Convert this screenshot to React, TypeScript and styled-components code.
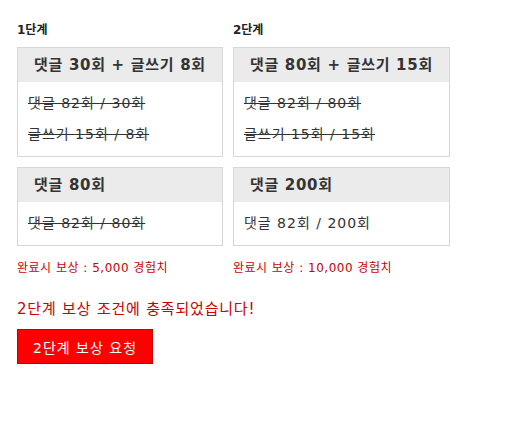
import React from 'react';
import styled, { createGlobalStyle } from 'styled-components';

const GlobalStyle = createGlobalStyle`
  body {
    margin: 0;
    background: #fff;
    font-family: "DejaVu Sans", "Noto Sans CJK KR", sans-serif;
  }
`;

const Page = styled.div`
  padding: 22px 17px;
`;

const Stages = styled.div`
  display: flex;
  align-items: flex-start;
  gap: 10px;
`;

const Stage = styled.div`
  display: flex;
  flex-direction: column;
`;

const StageLabel = styled.div`
  font-size: 12px;
  font-weight: bold;
  line-height: 16px;
  color: #222;
  margin-bottom: 9px;
`;

const Card = styled.div`
  border: 1px solid #d6d6d6;
  background: #fff;
  margin-bottom: 10px;
`;

const CardTitle = styled.div`
  background: #ebebeb;
  color: #333;
  font-size: 15px;
  font-weight: bold;
  line-height: 34px;
  letter-spacing: 0.7px;
  padding: 0 16px;
  white-space: nowrap;
`;

const CardBody = styled.div`
  padding: 6px 10px;
`;

const Progress = styled.div<{ $done?: boolean }>`
  font-size: 14px;
  line-height: 31px;
  letter-spacing: 1px;
  color: #333;
  white-space: nowrap;
  text-decoration: ${(p) => (p.$done ? 'line-through' : 'none')};
`;

const Reward = styled.div`
  margin-top: 4px;
  font-size: 12px;
  line-height: 16px;
  letter-spacing: 0.5px;
  color: #cc0000;
`;

const Notice = styled.div`
  margin-top: 23px;
  font-size: 15px;
  line-height: 20px;
  letter-spacing: 0.8px;
  color: #cc0000;
`;

const RequestButton = styled.button`
  margin-top: 10px;
  height: 35px;
  padding: 0 15px;
  background: #ff0000;
  border: 1px solid #c40000;
  color: #fff;
  font-family: inherit;
  font-size: 14px;
  letter-spacing: 1px;
  cursor: pointer;
`;

type Mission = { title: string; rows: { text: string; done: boolean }[] };
type StageData = { label: string; missions: Mission[]; reward: string };

const stages: StageData[] = [
  {
    label: '1단계',
    missions: [
      {
        title: '댓글 30회 + 글쓰기 8회',
        rows: [
          { text: '댓글 82회 / 30회', done: true },
          { text: '글쓰기 15회 / 8회', done: true },
        ],
      },
      { title: '댓글 80회', rows: [{ text: '댓글 82회 / 80회', done: true }] },
    ],
    reward: '완료시 보상 : 5,000 경험치',
  },
  {
    label: '2단계',
    missions: [
      {
        title: '댓글 80회 + 글쓰기 15회',
        rows: [
          { text: '댓글 82회 / 80회', done: true },
          { text: '글쓰기 15회 / 15회', done: true },
        ],
      },
      { title: '댓글 200회', rows: [{ text: '댓글 82회 / 200회', done: false }] },
    ],
    reward: '완료시 보상 : 10,000 경험치',
  },
];

const App = () => {
  return (
    <Page>
      <GlobalStyle />
      <Stages>
        {stages.map((s) => (
          <Stage key={s.label}>
            <StageLabel>{s.label}</StageLabel>
            {s.missions.map((m) => (
              <Card key={m.title}>
                <CardTitle>{m.title}</CardTitle>
                <CardBody>
                  {m.rows.map((r) => (
                    <Progress key={r.text} $done={r.done}>
                      {r.text}
                    </Progress>
                  ))}
                </CardBody>
              </Card>
            ))}
            <Reward>{s.reward}</Reward>
          </Stage>
        ))}
      </Stages>
      <Notice>2단계 보상 조건에 충족되었습니다!</Notice>
      <RequestButton>2단계 보상 요청</RequestButton>
    </Page>
  );
};

export default App;
